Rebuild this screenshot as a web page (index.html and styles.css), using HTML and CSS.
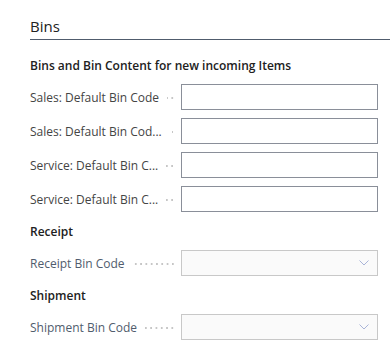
FILE: index.html
```html
<!DOCTYPE html>
<html lang="en">
<head>
  <meta charset="UTF-8" />
  <meta name="viewport" content="width=device-width, initial-scale=1.0"/>
  <title>Bins</title>
  <link rel="stylesheet" href="styles.css">
</head>
<body>
  <div class="page">
    <h2 class="section-title">Bins</h2>

    <!-- Grupo: contenido de ubicaciones -->
    <div class="group">
      <h3 class="group-title">Bins and Bin Content for new incoming Items</h3>
      <div class="field">
        <label class="field-label"><span>Sales: Default Bin Code</span></label>
        <input class="field-input" type="text">
      </div>
      <div class="field">
        <label class="field-label"><span>Sales: Default Bin Cod...</span></label>
        <input class="field-input" type="text">
      </div>
      <div class="field">
        <label class="field-label"><span>Service: Default Bin C...</span></label>
        <input class="field-input" type="text">
      </div>
      <div class="field">
        <label class="field-label"><span>Service: Default Bin C...</span></label>
        <input class="field-input" type="text">
      </div>
    </div>

    <div class="group">
      <h3 class="group-title">Receipt</h3>
      <div class="field disabled">
        <label class="field-label"><span>Receipt Bin Code</span></label>
        <div class="field-select">
          <svg class="chevron" width="10" height="6" viewBox="0 0 10 6"><path d="M0.5 0.5 L5 5 L9.5 0.5" fill="none" stroke="#a9b4d8" stroke-width="1"/></svg>
        </div>
      </div>
    </div>

    <div class="group">
      <h3 class="group-title">Shipment</h3>
      <div class="field disabled">
        <label class="field-label"><span>Shipment Bin Code</span></label>
        <div class="field-select">
          <svg class="chevron" width="10" height="6" viewBox="0 0 10 6"><path d="M0.5 0.5 L5 5 L9.5 0.5" fill="none" stroke="#a9b4d8" stroke-width="1"/></svg>
        </div>
      </div>
    </div>
  </div>
</body>
</html>
```

FILE: styles.css
```css
* {
  margin: 0;
  padding: 0;
  box-sizing: border-box;
}
body {
  font-family: "Open Sans", "Noto Sans", sans-serif;
  background: #fff;
  color: #212121;
}
.page {
  padding: 14px 0 0 30px;
}
/* Titulo de la seccion */
.section-title {
  font-size: 15px;
  font-weight: 400;
  line-height: 24px;
  padding-bottom: 1px;
  border-bottom: 1px solid #505c6d;
  color: #212121;
}
.group {
  display: flex;
  flex-direction: column;
}
.group-title {
  font-size: 12px;
  font-weight: 600;
  line-height: 20px;
  color: #212121;
  margin-top: 2px;
  margin-bottom: 8px;
}
.group:first-of-type .group-title {
  margin-top: 16px;
}
.field {
  display: flex;
  align-items: center;
  height: 26px;
  margin-bottom: 8px;
}
/* Etiqueta con puntos de relleno */
.field-label {
  width: 151px;
  flex: none;
  display: flex;
  align-items: center;
  font-size: 12px;
  color: #444;
  white-space: nowrap;
  overflow: hidden;
}
.field-label::after {
  content: "";
  flex: 1;
  height: 2px;
  margin: 2px 6px 0 8px;
  background-image: radial-gradient(circle, #c6c6c6 0.7px, transparent 1px);
  background-size: 5.3px 2px;
  background-position: right;
}
.disabled .field-label {
  color: #505c6d;
}
.field-input {
  width: 197px;
  height: 26px;
  border: 1px solid #8a8f99;
  background: #fff;
  outline: none;
}
.field-select {
  width: 197px;
  height: 26px;
  border: 1px solid #c8c8c8;
  background: #fafafa;
  display: flex;
  align-items: center;
  justify-content: flex-end;
  padding-right: 8px;
}
```
